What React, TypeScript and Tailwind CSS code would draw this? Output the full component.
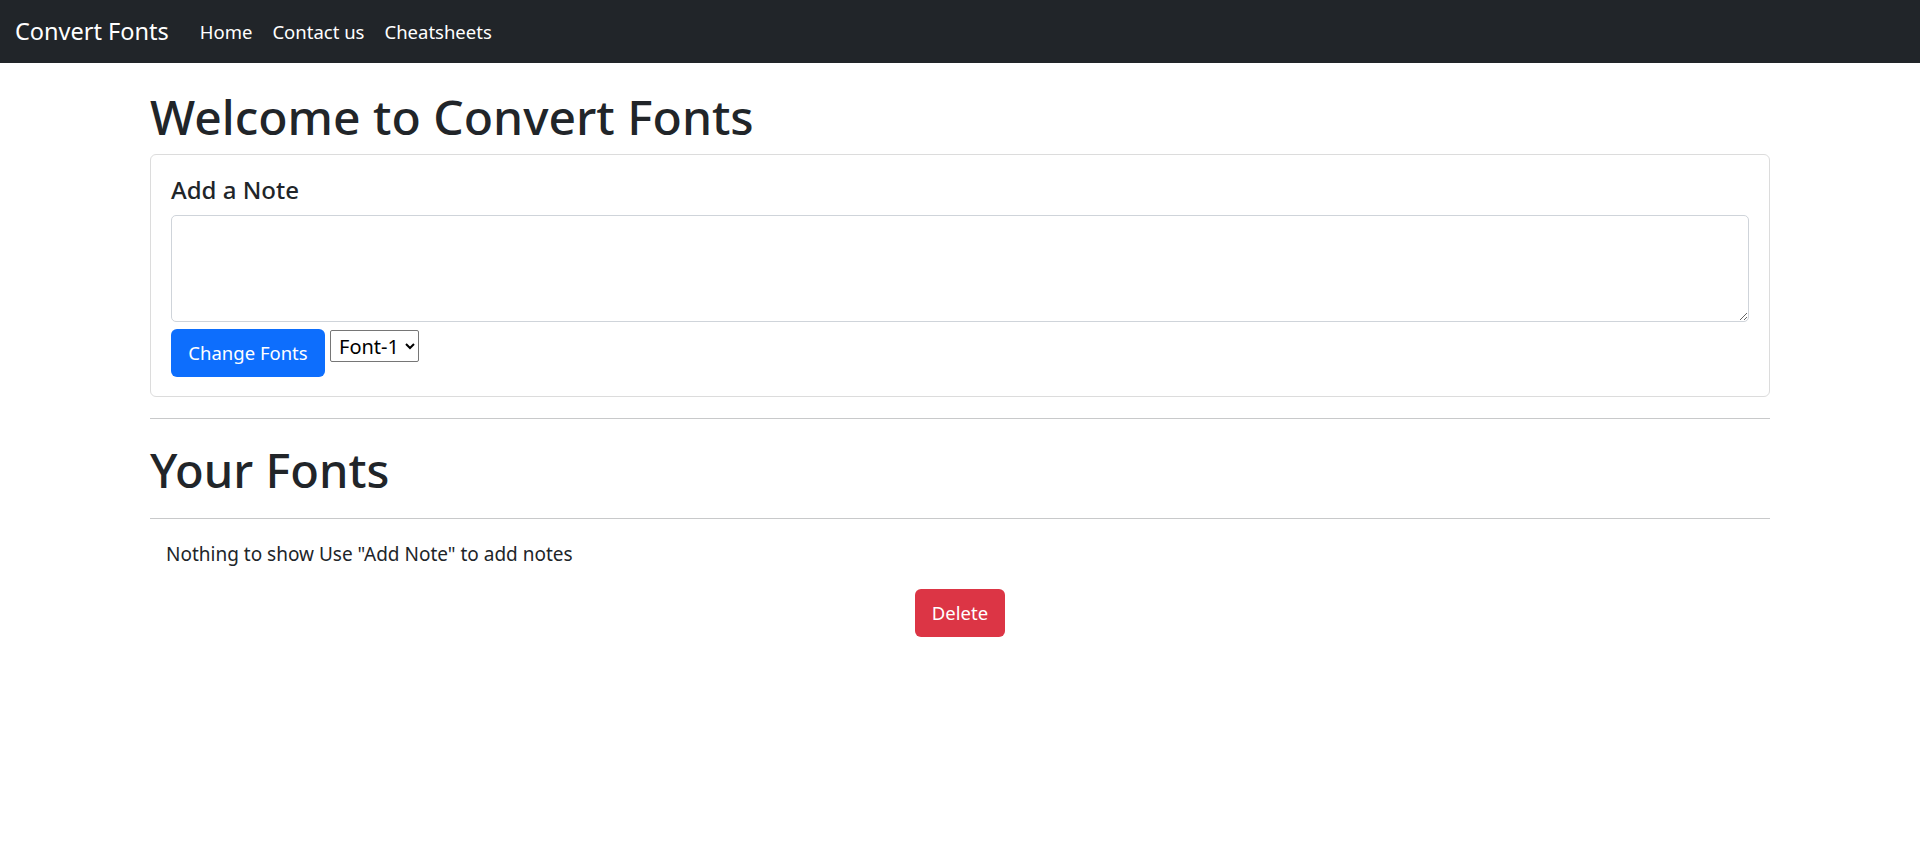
import React from "react";

const F = { fontFamily: '"Noto Sans", "Open Sans", sans-serif' };

export default function App() {
  return (
    <div className="min-h-[865px] bg-white text-[#212529]" style={F}>
      <nav className="h-[63px] bg-[#212529] flex items-center pl-[15px]">
        <span className="text-[23.5px] text-white mr-[31px] leading-none">Convert Fonts</span>
        <div className="flex gap-[20px] text-[18.5px] text-white leading-none pt-[2px]">
          <span>Home</span>
          <span>Contact us</span>
          <span>Cheatsheets</span>
        </div>
      </nav>
      <div className="mx-auto w-[1620px]">
        <h1 className="text-[48px] font-medium leading-[58px] pt-[25px] pb-[8px]">Welcome to Convert Fonts</h1>
        <div className="border border-[#dcdcdc] rounded-[6px] px-[20px] pt-[20px] pb-[19px]">
          <h5 className="text-[24px] font-medium leading-[29px] mb-[11px]">Add a Note</h5>
          <textarea className="block w-full h-[107px] border border-[#cfd4da] rounded-[5px] resize-y"></textarea>
          <div className="flex items-start gap-[5px] mt-[7px]">
            <button className="h-[48px] w-[154px] rounded-[6px] bg-[#0d6efd] text-white text-[18.5px] flex items-center justify-center">Change Fonts</button>
            <select className="mt-[1px] h-[32px] w-[89px] border border-[#767676] rounded-[2px] text-[20px] px-[4px] bg-white text-black">
              <option>Font-1</option>
            </select>
          </div>
        </div>
        <div className="h-[21px]"></div>
        <div className="h-px bg-[#c8c9ca]"></div>
        <h1 className="text-[47px] font-medium leading-[56px] pt-[23px] pb-[20px]">Your Fonts</h1>
        <div className="h-px bg-[#c8c9ca]"></div>
        <p className="text-[19px] leading-[28px] px-[16px] pt-[21px]">Nothing to show Use "Add Note" to add notes</p>
        <div className="flex justify-center pt-[21px]">
          <button className="h-[48px] w-[90px] rounded-[6px] bg-[#dc3545] text-white text-[18.5px] flex items-center justify-center">Delete</button>
        </div>
      </div>
    </div>
  );
}
